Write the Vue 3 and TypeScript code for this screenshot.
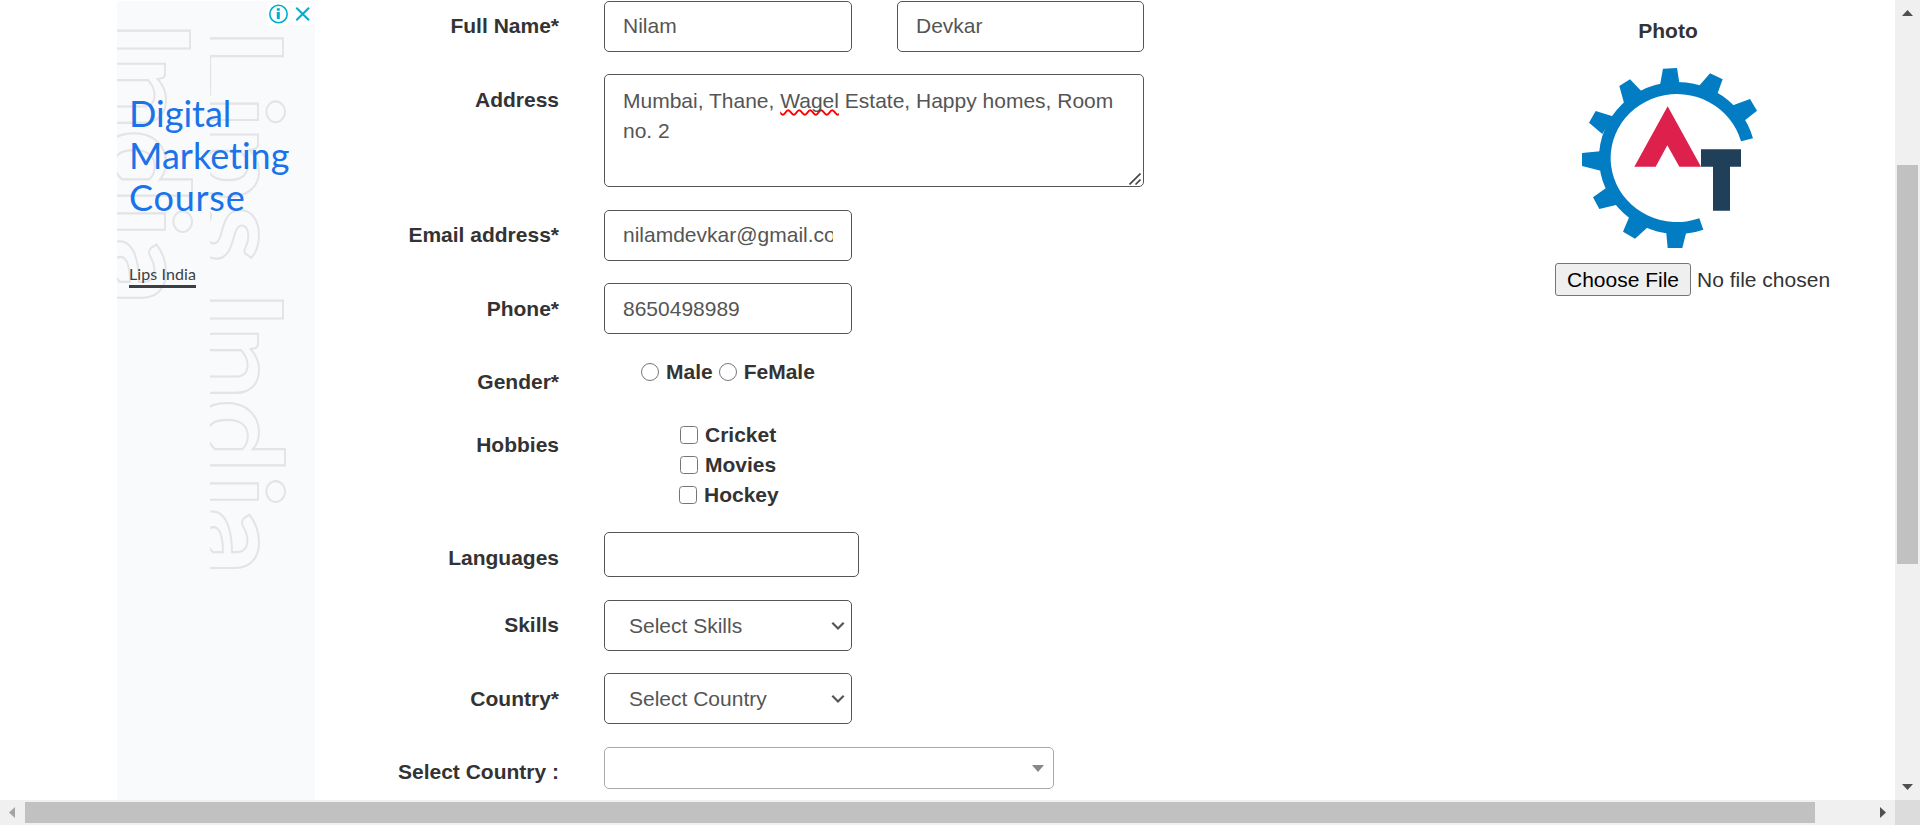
<script setup lang="ts">
interface Option {
  id: string
  label: string
}

const genders: Option[] = [
  { id: 'male', label: 'Male' },
  { id: 'female', label: 'FeMale' },
]

const hobbies: Option[] = [
  { id: 'cricket', label: 'Cricket' },
  { id: 'movies', label: 'Movies' },
  { id: 'hockey', label: 'Hockey' },
]
</script>

<template>
  <div class="window">
    <div class="page">
      <aside class="ad">
        <svg class="ad-pattern" viewBox="0 0 198 799" width="198" height="799" aria-hidden="true">
          <defs>
            <clipPath id="right-col"><rect x="93" y="0" width="105" height="799" /></clipPath>
          </defs>
          <g class="outline">
            <text transform="translate(-13 0) rotate(90) scale(1.12 1)" x="17 49 114 182 211.5" y="0">India</text>
          </g>
          <g class="outline" clip-path="url(#right-col)">
            <text transform="translate(80 0) rotate(90) scale(1.12 1)" x="24 84 112 182" y="0">Lips</text>
            <text transform="translate(80 0) rotate(90) scale(1.12 1)" x="258 290 355 423 453" y="0">India</text>
          </g>
        </svg>
        <div class="ad-controls">
          <span class="ad-button">
            <svg viewBox="0 0 23 22" width="23" height="22">
              <circle cx="11.5" cy="11" r="8.7" fill="none" stroke="#00aecd" stroke-width="1.6" />
              <path d="M9.8 9h3v7h-3zM9.8 5.2h3v2.6h-3z" fill="#00aecd" />
            </svg>
          </span>
          <span class="ad-button">
            <svg viewBox="0 0 23 22" width="23" height="22">
              <path d="M5.3 4.8 18 17.3M18 4.8 5.3 17.3" stroke="#00aecd" stroke-width="2.1" />
            </svg>
          </span>
        </div>
        <div class="ad-copy">
          <div class="ad-title">
            <span class="l1">Digital</span>
            <span class="l2">Marketing</span>
            <span class="l3">Course</span>
          </div>
          <span class="ad-link">Lips India</span>
        </div>
      </aside>

      <form class="form">
        <div class="row name">
          <label>Full Name*</label>
          <div class="field box">Nilam</div>
          <div class="field box last-name">Devkar</div>
        </div>
        <div class="row address low">
          <label>Address</label>
          <div class="field area">
            Mumbai, Thane, <span class="typo">Wagel</span> Estate, Happy homes, Room no. 2
            <svg class="grip" viewBox="0 0 12 12" width="12" height="12">
              <path d="M.5 11.500 11.500.5M6.500 11.500 11.500 6.500" stroke="#444" stroke-width="1.6" />
            </svg>
          </div>
        </div>
        <div class="row">
          <label>Email address*</label>
          <div class="field box"><span class="clip">nilamdevkar@gmail.com</span></div>
        </div>
        <div class="row low phone">
          <label>Phone*</label>
          <div class="field box">8650498989</div>
        </div>
        <div class="row gender low">
          <label>Gender*</label>
          <div class="radios">
            <span v-for="g in genders" :key="g.id" class="choice">
              <input type="radio" name="gender" :value="g.id" />{{ g.label }}
            </span>
          </div>
        </div>
        <div class="row hobbies low">
          <label>Hobbies</label>
          <div class="checks">
            <span v-for="h in hobbies" :key="h.id" class="choice" :class="h.id">
              <input type="checkbox" :value="h.id" />{{ h.label }}
            </span>
          </div>
        </div>
        <div class="row languages low">
          <label>Languages</label>
          <div class="field language-box"></div>
        </div>
        <div class="row">
          <label>Skills</label>
          <div class="field box select skills">
            Select Skills
            <svg viewBox="0 0 14 10" width="14" height="10">
              <path d="M1.300 1.800 7 7.500 12.700 1.800" fill="none" stroke="#555" stroke-width="2.200" />
            </svg>
          </div>
        </div>
        <div class="row country low">
          <label>Country*</label>
          <div class="field box select">
            Select Country
            <svg viewBox="0 0 14 10" width="14" height="10">
              <path d="M1.300 1.800 7 7.500 12.700 1.800" fill="none" stroke="#555" stroke-width="2.200" />
            </svg>
          </div>
        </div>
        <div class="row">
          <label>Select Country :</label>
          <div class="field combo"><span class="caret"></span></div>
        </div>
      </form>

      <section class="photo">
        <div class="photo-label">Photo</div>
        <svg class="logo" viewBox="126 204 528 540" width="176" height="180">
          <g fill="#027dc4">
            <path d="M639 415A235 228 0 1 0 490 689L478 655A199 192 0 1 1 603 424Z" />
            <path d="M369 206 411 204 419 255 359 260Z" />
            <path d="M510 220 548 238 531 285 475 260Z" />
            <path d="M630 297 651 332 612 363 575 317Z" />
            <path d="M238 258 270 238 306 275 252 309Z" />
            <path d="M167 333 218 349 187 402 147 368Z" />
            <path d="M126 459 180 454 182 512 126 498Z" />
            <path d="M159 592 197 565 231 614 178 627Z" />
            <path d="M268 650 324 681 285 716 249 695Z" />
            <path d="M378 690 440 692 427 744 383 744Z" />
          </g>
          <path fill="#dd214c" d="M383 319 483 500H418L382 436 347 500H283Z" />
          <path fill="#203f58" d="M483 448H603V500H570V632H519V500H483Z" />
        </svg>
        <div class="file">
          <span class="file-button">Choose File</span>
          <span class="file-name">No file chosen</span>
        </div>
      </section>
    </div>

    <div class="vbar">
      <svg viewBox="0 0 25 25" width="25" height="25"><path d="M7 16h11l-5.500-6z" fill="#505050" /></svg>
      <div class="vthumb"></div>
      <svg class="end" viewBox="0 0 25 25" width="25" height="25"><path d="M7 9h11l-5.500 6z" fill="#505050" /></svg>
    </div>
    <div class="hbar">
      <svg viewBox="0 0 25 25" width="25" height="25"><path d="M15 7v11l-6-5.500z" fill="#a3a3a3" /></svg>
      <div class="hthumb"></div>
      <svg class="end" viewBox="0 0 25 25" width="25" height="25"><path d="M10 7v11l6-5.500z" fill="#505050" /></svg>
    </div>
    <div class="corner"></div>
  </div>
</template>

<style>
body {
  margin: 0;
  overflow: hidden;
}
</style>

<style scoped>
* {
  box-sizing: border-box;
}
svg {
  display: block;
}
.window {
  display: grid;
  grid-template: 800px 25px / 1895px 25px;
  width: 1920px;
  height: 825px;
  background: #fff;
  font: 21px/30px "Liberation Sans", Arial, sans-serif;
  color: #333;
}
.page {
  display: flex;
  align-items: flex-start;
  overflow: hidden;
}

.ad {
  position: relative;
  width: 198px;
  height: 799px;
  margin: 1px 0 0 117px;
  background: #f9fafc;
  overflow: hidden;
}
.ad-pattern {
  position: absolute;
  inset: 0;
}
.outline text {
  font: 700 118px Lato, sans-serif;
  fill: none;
  stroke: #e3e4e6;
  stroke-width: 2;
  vector-effect: non-scaling-stroke;
}
.ad-controls {
  position: absolute;
  top: 2px;
  right: 1px;
  display: flex;
  gap: 1px;
}
.ad-button {
  background: #fff;
}
.ad-copy {
  position: relative;
  padding: 91px 0 0 12px;
}
.ad-title {
  display: flex;
  flex-direction: column;
  font: 36px/42px Lato, sans-serif;
  font-variant-ligatures: none;
  color: #1a73e8;
  white-space: nowrap;
}
.l3 {
  letter-spacing: 0.8px;
}
.ad-link {
  display: inline-block;
  margin-top: 44px;
  border-bottom: 3px solid #3c4043;
  font: 16px/23px Lato, sans-serif;
  letter-spacing: 0.1px;
  color: #3c4043;
}

.form {
  width: 900px;
  padding-top: 1px;
}
.row {
  display: flex;
  align-items: flex-start;
  height: 73px;
}
.row label {
  width: 244px;
  margin-right: 45px;
  padding-top: 10px;
  font-weight: 700;
  text-align: right;
}
.row.low label {
  padding-top: 11px;
}
.row.address {
  height: 136px;
}
.row.gender {
  height: 63px;
}
.row.hobbies {
  height: 113px;
}
.row.languages {
  height: 68px;
}
.row.country {
  height: 74px;
}
.field {
  border: 1px solid #555;
  border-radius: 5px;
  color: #555;
  white-space: nowrap;
}
.box {
  width: 248px;
  height: 51px;
  padding: 9px 18px;
}
.phone .box {
  padding-top: 10px;
}
.last-name {
  width: 247px;
  margin-left: 45px;
}
.area {
  position: relative;
  width: 540px;
  height: 113px;
  padding: 11px 18px;
  white-space: normal;
}
.typo {
  text-decoration: underline wavy #f00 1.5px;
  text-decoration-skip-ink: none;
}
.grip {
  position: absolute;
  right: 2px;
  bottom: 1px;
}
.clip {
  display: block;
  overflow: hidden;
}
.radios {
  display: flex;
  gap: 6px;
  padding: 1px 0 0 37px;
}
.checks {
  display: flex;
  flex-direction: column;
  padding: 1px 0 0 76px;
}
.choice {
  display: flex;
  align-items: center;
  font-weight: 700;
}
.choice.hockey {
  margin-left: -1px;
}
.choice input {
  appearance: none;
  width: 18px;
  height: 18px;
  margin: 0 7px 0 0;
  border: 1px solid #767676;
  border-radius: 3.500px;
  background: #fff;
}
.choice input[type="radio"] {
  border-radius: 50%;
}
.language-box {
  width: 255px;
  height: 45px;
}
.select {
  display: flex;
  align-items: flex-start;
  justify-content: space-between;
  padding: 9px 6px 0 24px;
}
.select.skills {
  padding-top: 10px;
}
.country .select {
  padding-top: 10px;
}
.select svg {
  margin-top: 10px;
}
.combo {
  display: flex;
  align-items: center;
  justify-content: flex-end;
  width: 450px;
  height: 42px;
  padding-right: 9px;
  border-color: #aaa;
}
.caret {
  border: 6px solid transparent;
  border-top: 7px solid #888;
  border-bottom: 0;
}

.photo {
  width: 640px;
  padding: 16px 0 0 340px;
  white-space: nowrap;
}
.photo-label {
  width: 226px;
  font-weight: 700;
  text-align: center;
}
.logo {
  margin: 22px 0 15px 27px;
}
.file {
  display: flex;
  align-items: center;
  gap: 6px;
}
.file-button {
  width: 136px;
  height: 33px;
  border: 1px solid #767676;
  border-radius: 3px;
  background: #efefef;
  line-height: 31px;
  color: #000;
  text-align: center;
}

.vbar {
  display: flex;
  flex-direction: column;
  background: #f0f0f0;
}
.vthumb {
  width: 21px;
  height: 399px;
  margin: 140px 2px 0;
  background: #c1c1c1;
}
.vbar .end {
  margin-top: auto;
}
.hbar {
  display: flex;
  align-items: center;
  background: #f0f0f0;
}
.hthumb {
  width: 1790px;
  height: 21px;
  background: #c1c1c1;
}
.hbar .end {
  margin-left: auto;
}
.corner {
  background: #dcdcdc;
}
</style>
